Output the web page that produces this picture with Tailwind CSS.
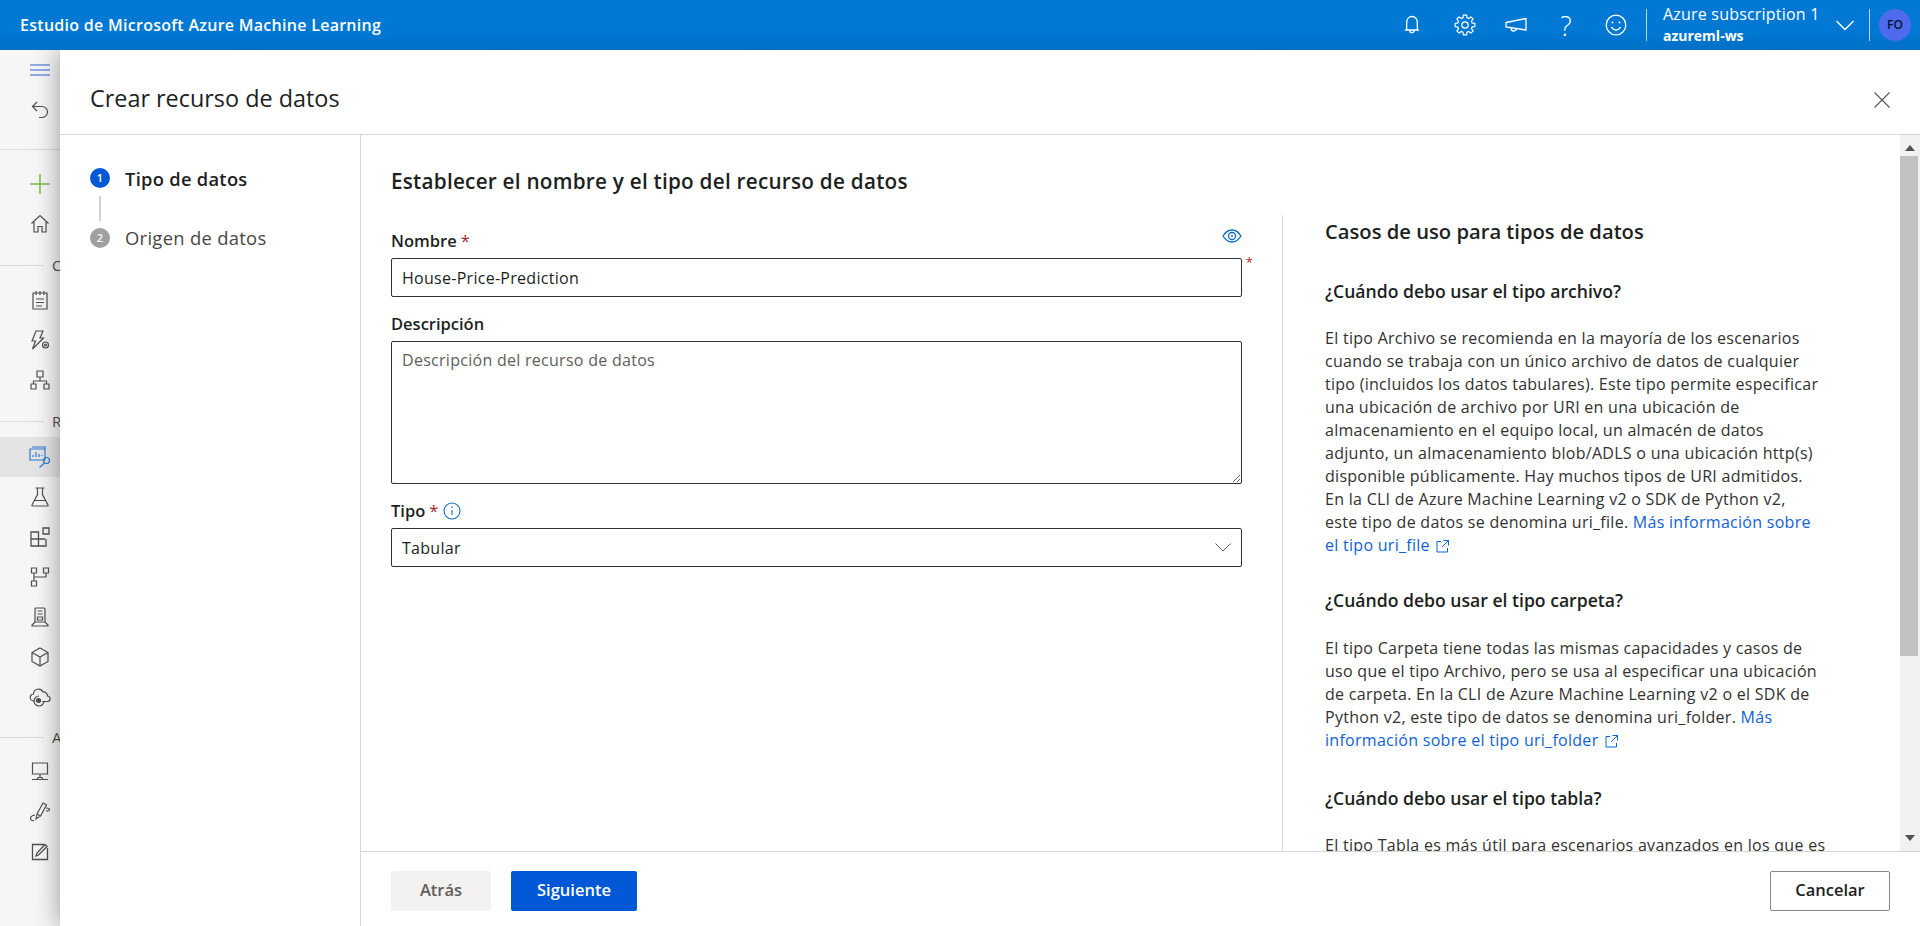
<!DOCTYPE html>
<html lang="es">
<head>
<meta charset="utf-8">
<script src="https://cdn.jsdelivr.net/npm/@tailwindcss/browser@4"></script>
<title>Crear recurso de datos</title>
</head>
<body class="m-0 h-[926px] w-[1920px] overflow-hidden bg-white font-['Open_Sans',sans-serif] text-[#201f1e]">
<header class="relative z-20 flex h-[50px] items-center bg-gradient-to-b from-[#0078d4] from-60% to-[#0070c6] text-white">
  <div class="pl-[20px] text-[16px] font-semibold tracking-[0.28px]">Estudio de Microsoft Azure Machine Learning</div>
  <div class="ml-auto flex h-full items-center">
    <svg class="mr-[33px]" width="18" height="20" viewBox="0 0 18 20" fill="none" stroke="#fff" stroke-width="1.3"><path d="M2 15h14M3.700 15V7.500C3.700 4 6 1.500 9 1.500s5.300 2.500 5.300 6V15M6.800 15.500a2.200 2.200 0 0 0 4.400 0"/></svg>
    <svg class="mr-[29px]" width="22" height="22" viewBox="-11 -11 22 22" fill="none" stroke="#fff" stroke-width="1.200"><polygon points="-2.060,-7.110 -1.560,-9.880 1.560,-9.880 2.060,-7.110 3.570,-6.480 5.880,-8.090 8.090,-5.880 6.480,-3.570 7.110,-2.060 9.880,-1.560 9.880,1.560 7.110,2.060 6.480,3.570 8.090,5.880 5.880,8.090 3.570,6.480 2.060,7.110 1.560,9.880 -1.560,9.880 -2.060,7.110 -3.570,6.480 -5.880,8.090 -8.090,5.880 -6.480,3.570 -7.110,2.060 -9.880,1.560 -9.880,-1.560 -7.110,-2.060 -6.480,-3.570 -8.090,-5.880 -5.880,-8.090 -3.570,-6.480"/><circle r="3.200"/></svg>
    <svg class="mr-[31px]" width="22" height="18" viewBox="0 0 22 18" fill="none" stroke="#fff" stroke-width="1.3"><path d="M1 6.500 21 2.500v11.500L1 11zM6 12c0 2 1 3 2.500 3s2.500-.8 2.500-2"/></svg>
    <div class="mr-[31px] w-[16px] text-center text-[27px] font-light leading-none">?</div>
    <svg class="mr-[19px]" width="22" height="22" viewBox="0 0 22 22" fill="none" stroke="#fff" stroke-width="1.3"><circle cx="11" cy="11" r="9.800"/><circle cx="7.500" cy="8.500" r="1" fill="#fff" stroke="none"/><circle cx="14.500" cy="8.500" r="1" fill="#fff" stroke="none"/><path d="M6.500 13c1 2 2.500 3 4.500 3s3.500-1 4.500-3"/></svg>
    <div class="h-[32px] w-px bg-white/70"></div>
    <div class="ml-[16px] w-[172px] -translate-y-[1px]">
      <div class="text-[16px] tracking-[0.2px] leading-[20px]">Azure subscription 1</div>
      <div class="mt-[4px] text-[14px] font-bold leading-[16px]">azureml-ws</div>
    </div>
    <svg width="20" height="12" viewBox="0 0 20 12" fill="none" stroke="#fff" stroke-width="1.4"><path d="m1.500 2 8.500 8.500L18.500 2"/></svg>
    <div class="ml-[14px] h-[32px] w-px bg-white/70"></div>
    <div class="mx-[9px] flex h-[32px] w-[32px] items-center justify-center rounded-full bg-[#4f6bed] text-[12px] font-semibold text-[#0b1030]">FO</div>
  </div>
</header>

<div class="flex h-[876px]">
  <aside class="relative z-0 h-full w-[60px] shrink-0 overflow-hidden bg-[#f6f6f6] text-[#505050]">
    <div class="flex h-[40px] w-[80px] items-center justify-center">
      <svg width="20" height="12" viewBox="0 0 20 12" fill="none" stroke="#2b5fd0" stroke-width="1"><path d="M0 1h20M0 6h20M0 11h20"/></svg>
    </div>
    <div class="flex h-[40px] w-[80px] items-center justify-center">
      <svg width="18" height="18" viewBox="0 0 18 18" fill="none" stroke="#505050" stroke-width="1.200"><path d="M6 1 1.500 5.500 6 10M1.500 5.500H11a5.500 5.500 0 0 1 0 11H8"/></svg>
    </div>
    <div class="mt-[19px] h-px w-[60px] bg-[#dcdcdc]"></div>
    <div class="mt-[14px] flex h-[40px] w-[80px] items-center justify-center">
      <svg width="22" height="22" viewBox="0 0 22 22" fill="none" stroke="#7ab648" stroke-width="1.500"><path d="M11 1v20M1 11h20"/></svg>
    </div>
    <div class="flex h-[40px] w-[80px] items-center justify-center">
      <svg width="20" height="20" viewBox="0 0 20 20" fill="none" stroke="#505050" stroke-width="1.200"><path d="M1.500 9.500 10 1.500l8.500 8M4 8v10h4v-5.500h4V18h4V8"/></svg>
    </div>
    <div class="flex h-[36px] items-start pt-[14px]"><div class="mt-[7px] h-px w-[44px] shrink-0 bg-[#dcdcdc]"></div><span class="ml-[8px] text-[15px] leading-none">C</span></div>
    <div class="flex h-[40px] w-[80px] items-center justify-center">
      <svg width="16" height="20" viewBox="0 0 16 20" fill="none" stroke="#505050" stroke-width="1.200"><path d="M1 3h14v16H1zM4 1v4M8 1v4M12 1v4M4 9h8M4 12.500h8M4 16h6"/></svg>
    </div>
    <div class="flex h-[40px] w-[80px] items-center justify-center">
      <svg width="20" height="20" viewBox="0 0 20 20" fill="none" stroke="#505050" stroke-width="1.200"><path d="M6 1h7L10 8h3.500L2.500 19 5.500 11H2z"/><circle cx="15.500" cy="15" r="3"/><circle cx="15.500" cy="15" r="1"/></svg>
    </div>
    <div class="flex h-[40px] w-[80px] items-center justify-center">
      <svg width="20" height="20" viewBox="0 0 20 20" fill="none" stroke="#505050" stroke-width="1.200"><path d="M7 1h6v6H7zM1 14h5v5H1zM14 14h5v5h-5zM10 7v4M3.500 14v-3h13v3"/></svg>
    </div>
    <div class="flex h-[37px] items-start pt-[14px]"><div class="mt-[7px] h-px w-[44px] shrink-0 bg-[#dcdcdc]"></div><span class="ml-[8px] text-[15px] leading-none">R</span></div>
    <div class="flex h-[40px] w-[80px] items-center justify-center bg-[#e4e4e4]">
      <svg width="22" height="22" viewBox="0 0 22 22" fill="none" stroke="#2b7cd3" stroke-width="1.200"><path d="M3 1h13v2M1 3h15v11H1zM4 11V9M7 11V6M10 11V8M13 9v1"/><circle cx="17.500" cy="14.500" r="3"/><path d="m15.500 17-5 4.500"/></svg>
    </div>
    <div class="flex h-[40px] w-[80px] items-center justify-center">
      <svg width="18" height="20" viewBox="0 0 18 20" fill="none" stroke="#505050" stroke-width="1.200"><path d="M4.500 1h9M6.500 1v6.500L1 18c-.3.500 0 1 .6 1h14.800c.6 0 .9-.5.6-1L11.500 7.500V1M3.500 13.500h11"/></svg>
    </div>
    <div class="flex h-[40px] w-[80px] items-center justify-center">
      <svg width="20" height="20" viewBox="0 0 20 20" fill="none" stroke="#505050" stroke-width="1.300"><path d="M1 5h7.500v14H1zM1 12h14M8.500 12v7H16v-7M13 1h6v6h-6z"/></svg>
    </div>
    <div class="flex h-[40px] w-[80px] items-center justify-center">
      <svg width="20" height="20" viewBox="0 0 20 20" fill="none" stroke="#505050" stroke-width="1.200"><path d="M1.500 1h5v5h-5zM13.500 1h5v5h-5zM1.500 14h5v5h-5zM4 6v8M4 10h12V6"/></svg>
    </div>
    <div class="flex h-[40px] w-[80px] items-center justify-center">
      <svg width="18" height="20" viewBox="0 0 18 20" fill="none" stroke="#505050" stroke-width="1.200"><path d="M4 15V2a1 1 0 0 1 1-1h8a1 1 0 0 1 1 1v13M4 15l-3 3v1h16v-1l-3-3zM6.500 4h5M6.500 7h5M6.500 10h5v3h-5z"/></svg>
    </div>
    <div class="flex h-[40px] w-[80px] items-center justify-center">
      <svg width="18" height="20" viewBox="0 0 18 20" fill="none" stroke="#505050" stroke-width="1.200"><path d="m9 1 8 4.500v9L9 19l-8-4.500v-9zM1 5.500 9 10l8-4.500M9 10v9"/></svg>
    </div>
    <div class="flex h-[40px] w-[80px] items-center justify-center">
      <svg width="22" height="20" viewBox="0 0 22 20" fill="none" stroke="#505050" stroke-width="1.200"><path d="M6 14H5a3.500 3.500 0 0 1-.5-7 5 5 0 0 1 9.500-2 4 4 0 0 1 4.500 4 2.800 2.800 0 0 1 .5 5.500H13"/><path d="M10 9a5 5 0 1 0 5 5"/><circle cx="9.500" cy="13.500" r="2" fill="#505050"/></svg>
    </div>
    <div class="flex h-[35px] items-start pt-[13px]"><div class="mt-[7px] h-px w-[44px] shrink-0 bg-[#dcdcdc]"></div><span class="ml-[8px] text-[15px] leading-none">A</span></div>
    <div class="flex h-[40px] w-[80px] items-center justify-center">
      <svg width="18" height="20" viewBox="0 0 18 20" fill="none" stroke="#505050" stroke-width="1.200"><path d="M1.500 1h15v11h-15zM9 12v3M1 17.500h5M12 17.500h5M6 17.500l1-2h4l1 2z"/></svg>
    </div>
    <div class="flex h-[40px] w-[80px] items-center justify-center">
      <svg width="22" height="22" viewBox="0 0 22 22" fill="none" stroke="#505050" stroke-width="1.200"><path d="m7 18 1-5L14 2l3.500 2-6 11zM8 13l3.500 2M6 14c-3 .5-4.500 2-4.500 3.500S3 20 5 19.500M17 7c2 0 3.500.5 3.500 1.500S19 10 17 10"/></svg>
    </div>
    <div class="flex h-[40px] w-[80px] items-center justify-center">
      <svg width="18" height="18" viewBox="0 0 18 18" fill="none" stroke="#505050" stroke-width="1.300"><path d="M13 1.500H1.500v15h15V5"/><path d="m5 13 1-3 8-8.500 2 2L7.500 12z"/></svg>
    </div>
  </aside>

  <div class="relative z-10 flex h-full w-[1860px] flex-col bg-white shadow-[0_0_24px_rgba(0,0,0,0.4)]">
    <div class="relative flex h-[85px] shrink-0 items-center border-b border-[#d6d6d6] pt-[12px] pl-[30px]">
      <h1 class="text-[23.400px] font-normal leading-[30px] text-[#201f1e]">Crear recurso de datos</h1>
      <svg class="absolute right-[30px] top-[42px]" width="16" height="16" viewBox="0 0 16 16" fill="none" stroke="#555" stroke-width="1.100"><path d="m.5.500 15 15M15.500.500l-15 15"/></svg>
    </div>
    <div class="flex min-h-0 flex-1">
      <nav class="w-[301px] shrink-0 border-r border-[#d6d6d6] pl-[30px] pt-[33px]">
        <div class="flex h-[20px] items-center">
          <span class="flex h-[20px] w-[20px] shrink-0 items-center justify-center rounded-full bg-[#0058d6] text-[11px] font-semibold text-white">1</span>
          <span class="ml-[15px] pt-[2px] text-[18.300px] font-semibold tracking-[0.3px] leading-[20px] text-[#201f1e]">Tipo de datos</span>
        </div>
        <div class="ml-[9px] mt-[8px] h-[25px] w-[2px] bg-[#d2d2d2]"></div>
        <div class="mt-[7px] flex h-[20px] items-center">
          <span class="flex h-[20px] w-[20px] shrink-0 items-center justify-center rounded-full bg-[#a0a0a0] text-[11px] font-semibold text-white">2</span>
          <span class="ml-[15px] text-[18.400px] tracking-[0.3px] leading-[20px] text-[#484644]">Origen de datos</span>
        </div>
      </nav>
      <div class="flex min-w-0 flex-1 flex-col">
        <div class="relative min-h-0 flex-1 overflow-hidden">
          <div class="pl-[30px] pt-[32px]">
            <h2 class="text-[20.700px] font-semibold tracking-[0.25px] leading-[28px]">Establecer el nombre y el tipo del recurso de datos</h2>
          </div>
          <div class="mt-[20px] flex h-[700px]">
            <section class="w-[921px] shrink-0 pl-[30px]">
              <div class="relative w-[851px]">
                <div class="flex h-[43px] items-center pt-[9px] text-[16.500px] font-semibold leading-[20px]"><span>Nombre</span><span class="ml-[4px] font-normal text-[#a4262c]">*</span></div>
                <svg class="absolute right-0 top-[14px]" width="20" height="14" viewBox="0 0 20 14" fill="none" stroke="#0f6cbd" stroke-width="1.300"><path d="M1 7c2.500-4 5.500-6 9-6s6.500 2 9 6c-2.500 4-5.500 6-9 6s-6.500-2-9-6z"/><circle cx="10" cy="7" r="3.500"/><circle cx="10" cy="7" r="1" fill="#0f6cbd" stroke="none"/></svg>
                <span class="absolute -right-[11px] top-[41px] text-[13px] leading-none text-[#a4262c]">*</span>
                <input class="block h-[39px] w-[851px] rounded-[2px] border border-[#323130] px-[10px] text-[16px] tracking-[0.28px] text-[#201f1e] outline-none" value="House-Price-Prediction">
                <div class="flex h-[44px] items-center pt-[10px] text-[16.500px] font-semibold leading-[20px]">Descripción</div>
                <textarea class="block h-[143px] w-[851px] rounded-[2px] border border-[#323130] px-[10px] py-[7px] text-[16px] tracking-[0.28px] leading-[22px] outline-none placeholder:text-[#605e5c]" placeholder="Descripción del recurso de datos"></textarea>
                <div class="flex h-[44px] items-center pt-[10px] text-[16.500px] font-semibold leading-[20px]"><span>Tipo</span><span class="ml-[4px] font-normal text-[#a4262c]">*</span>
                  <svg class="ml-[5px]" width="18" height="18" viewBox="0 0 18 18" fill="none" stroke="#0f6cbd" stroke-width="1.100"><circle cx="9" cy="9" r="8"/><path d="M9 8v5"/><circle cx="9" cy="5.300" r=".8" fill="#0f6cbd" stroke="none"/></svg>
                </div>
                <div class="flex h-[39px] w-[851px] items-center justify-between rounded-[2px] border border-[#323130] pl-[10px] pr-[10px] text-[16px] tracking-[0.28px]">
                  <span>Tabular</span>
                  <svg width="16" height="9" viewBox="0 0 16 9" fill="none" stroke="#605e5c" stroke-width="1"><path d="m.5.500 7.500 7.500L15.500.500"/></svg>
                </div>
              </div>
            </section>
            <aside class="w-[617px] shrink-0 border-l border-[#d6d6d6] pl-[42px] pt-[2px] text-[#323130]">
              <h3 class="text-[20.200px] font-semibold leading-[28px] text-[#201f1e]">Casos de uso para tipos de datos</h3>
              <h4 class="mt-[32px] text-[17.600px] font-semibold leading-[28px] text-[#201f1e]">¿Cuándo debo usar el tipo archivo?</h4>
              <p class="mt-[22px] w-[510px] text-[16px] tracking-[0.28px] leading-[23px]">El tipo Archivo se recomienda en la mayoría de los escenarios<br>cuando se trabaja con un único archivo de datos de cualquier<br>tipo (incluidos los datos tabulares). Este tipo permite especificar<br>una ubicación de archivo por URI en una ubicación de<br>almacenamiento en el equipo local, un almacén de datos<br>adjunto, un almacenamiento blob/ADLS o una ubicación http(s)<br>disponible públicamente. Hay muchos tipos de URI admitidos.<br>En la CLI de Azure Machine Learning v2 o SDK de Python v2,<br>este tipo de datos se denomina uri_file. <a class="text-[#0f62d6]" href="#">Más información sobre<br>el tipo uri_file <svg class="ml-[2px] inline-block" width="13" height="13" viewBox="0 0 13 13" fill="none" stroke="#0f62d6" stroke-width="1"><path d="M5 1.500H1v10.500h10.500V8M7.500.500h5v5M12.500.500l-6.500 6.500"/></svg></a></p>
              <h4 class="mt-[29px] text-[17.600px] font-semibold leading-[28px] text-[#201f1e]">¿Cuándo debo usar el tipo carpeta?</h4>
              <p class="mt-[23px] w-[510px] text-[16px] tracking-[0.28px] leading-[23px]">El tipo Carpeta tiene todas las mismas capacidades y casos de<br>uso que el tipo Archivo, pero se usa al especificar una ubicación<br>de carpeta. En la CLI de Azure Machine Learning v2 o el SDK de<br>Python v2, este tipo de datos se denomina uri_folder. <a class="text-[#0f62d6]" href="#">Más<br>información sobre el tipo uri_folder <svg class="ml-[2px] inline-block" width="13" height="13" viewBox="0 0 13 13" fill="none" stroke="#0f62d6" stroke-width="1"><path d="M5 1.500H1v10.500h10.500V8M7.500.500h5v5M12.500.500l-6.500 6.500"/></svg></a></p>
              <h4 class="mt-[32px] text-[17.600px] font-semibold leading-[28px] text-[#201f1e]">¿Cuándo debo usar el tipo tabla?</h4>
              <p class="mt-[22px] w-[510px] text-[16px] tracking-[0.28px] leading-[23px]">El tipo Tabla es más útil para escenarios avanzados en los que es</p>
            </aside>
          </div>
          <div class="absolute bottom-0 right-0 top-0 flex w-[20px] flex-col items-center bg-[#f1f1f1]">
            <svg class="mt-[10px]" width="10" height="6" viewBox="0 0 10 6" fill="#505050"><path d="M5 0 10 6H0z"/></svg>
            <div class="mt-[5px] h-[500px] w-[18px] self-start bg-[#c1c1c1]"></div>
            <svg class="mt-auto mb-[10px]" width="10" height="6" viewBox="0 0 10 6" fill="#505050"><path d="M5 6 10 0H0z"/></svg>
          </div>
        </div>
        <footer class="flex h-[75px] shrink-0 items-center border-t border-[#d6d6d6] pl-[30px] pr-[30px] pt-[3px]">
          <button class="h-[40px] w-[100px] rounded-[2px] bg-[#f3f2f1] text-[16.500px] font-semibold text-[#605e5c]">Atrás</button>
          <button class="ml-[20px] h-[40px] w-[126px] rounded-[2px] bg-[#0058d6] text-[16.500px] font-semibold text-white">Siguiente</button>
          <button class="ml-auto h-[40px] w-[120px] rounded-[2px] border border-[#8a8886] bg-white text-[16.500px] font-semibold text-[#201f1e]">Cancelar</button>
        </footer>
      </div>
    </div>
  </div>
</div>
</body>
</html>
